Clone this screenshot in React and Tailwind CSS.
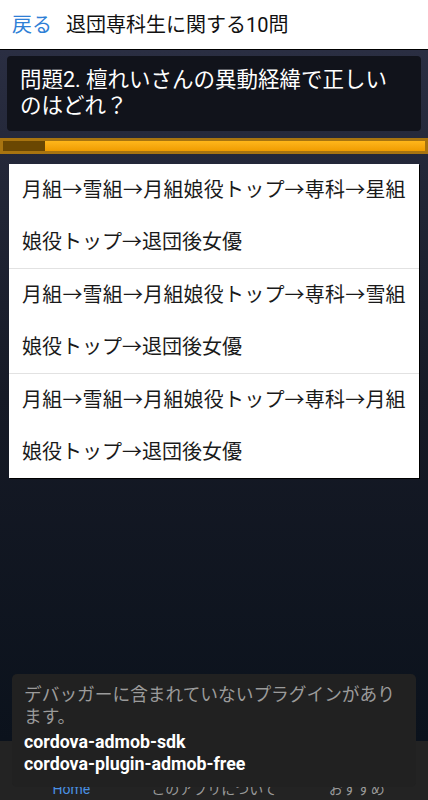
export default function App() {
  const ff = { fontFamily: "Roboto, 'Noto Sans CJK JP', sans-serif" };
  const options = [
    ["月組→雪組→月組娘役トップ→専科→星組", "娘役トップ→退団後女優"],
    ["月組→雪組→月組娘役トップ→専科→雪組", "娘役トップ→退団後女優"],
    ["月組→雪組→月組娘役トップ→専科→月組", "娘役トップ→退団後女優"],
  ];
  return (
    <div style={ff} className="relative w-[428px] h-[800px] overflow-hidden flex flex-col bg-[#0b121c]">
      <div className="h-[50px] shrink-0 bg-white border-b border-black flex items-center">
        <span className="ml-[12px] text-[20px] leading-none text-[#2f7fd6]">戻る</span>
        <span className="ml-[14px] text-[20px] leading-none text-[#111]">退団専科生に関する10問</span>
      </div>
      <div className="flex-1 bg-gradient-to-b from-[#2a2e42] via-[#161a26] to-[#0b121c] flex flex-col">
        <div className="mx-[7px] mt-[6px] rounded-[4px] bg-[#11131b] px-[13px] pt-[11px] pb-[12px] text-white text-[21.5px] leading-[26px]">
          問題2. 檀れいさんの異動経緯で正しい<br />のはどれ？
        </div>
        <div className="mt-[7px] h-[16px] bg-[#a87410] p-[3px] flex">
          <div className="w-[42px] bg-[#6a4702]"></div>
          <div className="flex-1 bg-gradient-to-b from-[#ffb61a] to-[#f09c00]"></div>
        </div>
        <div className="mx-[9px] mt-[10px] bg-white shadow-[1px_1px_0_#000]">
          {options.map((o, i) => (
            <div key={i} className={"pl-[13px] text-[20px] leading-[52px] text-[#1a1a1a] " + (i > 0 ? "border-t border-[#e2e2e2]" : "")}>
              <div className="tracking-[0.2px]">{o[0]}</div>
              <div>{o[1]}</div>
            </div>
          ))}
        </div>
      </div>
      <div className="h-[59px] shrink-0 bg-[#232323] grid grid-cols-3 items-end">
        <div className="text-center text-[14px] leading-[20px] pb-[1px] text-[#4a90e2]">Home</div>
        <div className="text-center text-[14px] leading-[20px] pb-[1px] text-[#9a9a9a]">このアプリについて</div>
        <div className="text-center text-[14px] leading-[20px] pb-[1px] text-[#9a9a9a]">おすすめ</div>
      </div>
      <div className="absolute left-[12px] right-[12px] top-[674px] h-[113px] rounded-[5px] bg-[#212121] px-[12px] pt-[11px]">
        <div className="text-[17.7px] leading-[21.5px] text-[#9b9b9b]">デバッガーに含まれていないプラグインがあります。</div>
        <div className="mt-[3px] text-[17.8px] leading-[22px] font-bold text-white">cordova-admob-sdk</div>
        <div className="text-[17.8px] leading-[22px] font-bold text-white">cordova-plugin-admob-free</div>
      </div>
    </div>
  );
}
